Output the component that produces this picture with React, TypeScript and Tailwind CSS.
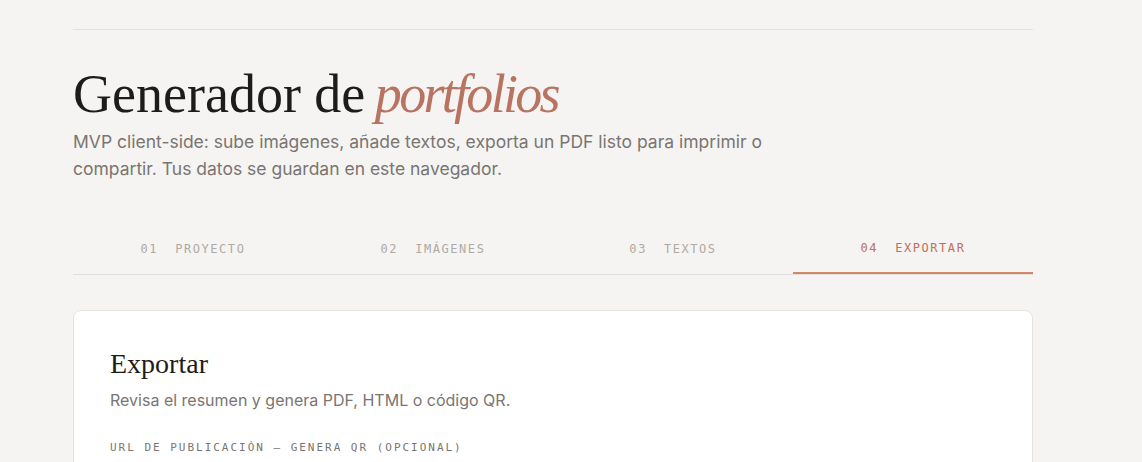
import React from "react";

export default function App() {
  const tabs = [
    { n: "01", label: "PROYECTO" },
    { n: "02", label: "IMÁGENES" },
    { n: "03", label: "TEXTOS" },
    { n: "04", label: "EXPORTAR", active: true },
  ];
  return (
    <div className="min-h-[462px] bg-[#f5f4f2] font-['Inter',sans-serif]">
      <div className="w-[960px] pt-[29px] ml-[73px]">
        <div className="border-t border-[#e4e1dd]" />
        <h1 className="mt-[33px] text-[54px] leading-[62px] text-[#1e1c1a] font-['Liberation_Serif',serif]">
          Generador de{" "}
          <em className="ml-[-4px] italic tracking-[-0.05em] text-[#b97461]">portfolios</em>
        </h1>
        <p className="mt-[3px] max-w-[720px] text-[17.5px] leading-[27px] text-[#7a7571]">
          MVP client-side: sube imágenes, añade textos, exporta un PDF listo para imprimir o compartir. Tus datos se guardan en este navegador.
        </p>
        <div className="mt-[45px] grid grid-cols-4 border-b border-[#e2dfdb]">
          {tabs.map((t) => (
            <div
              key={t.n}
              className={`flex h-[47px] pb-[4px] items-center justify-center gap-[17px] font-['DejaVu_Sans_Mono',monospace] text-[12px] tracking-[0.13em] ${
                t.active
                  ? "text-[#c0705a] border-b-2 border-[#d4866b] -mb-px"
                  : "text-[#b0aaa4]"
              }`}
            >
              <span>{t.n}</span>
              <span>{t.label}</span>
            </div>
          ))}
        </div>
        <div className="mt-[35px] rounded-[8px] border border-[#e6e3df] bg-white px-[36px] pt-[37px] pb-[40px] w-[960px]">
          <h2 className="text-[28px] leading-[32px] text-[#1e1c1a] font-['Liberation_Serif',serif]">
            Exportar
          </h2>
          <p className="mt-[8px] text-[16px] leading-[24px] text-[#7a7571]">
            Revisa el resumen y genera PDF, HTML o código QR.
          </p>
          <div className="mt-[28px] font-['DejaVu_Sans_Mono',monospace] text-[11px] tracking-[0.18em] text-[#7a7571]">
            URL DE PUBLICACIÓN — GENERA QR (OPCIONAL)
          </div>
          <div className="mt-[10px] h-[44px] rounded-[6px] border border-[#e6e3df]" />
        </div>
      </div>
    </div>
  );
}
